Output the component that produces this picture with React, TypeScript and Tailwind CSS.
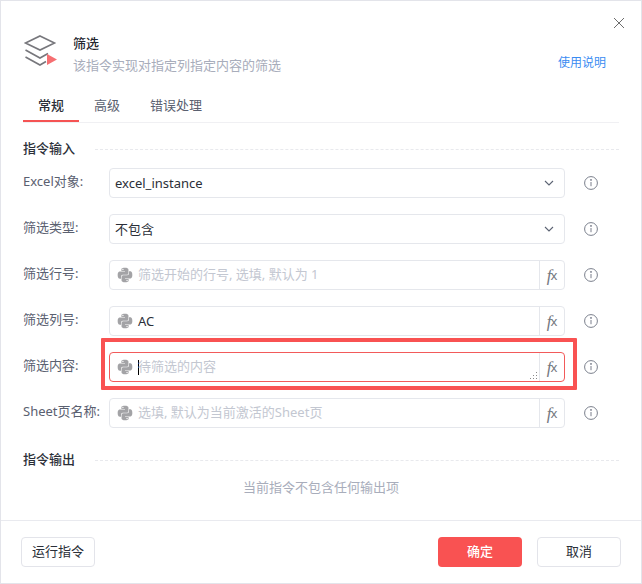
import React from "react";

function Py() {
  return (
    <svg width="16" height="16" viewBox="0 0 24 24" fill="#a3a3a6" className="shrink-0">
      <path d="M11.9 1C6.3 1 6.6 3.4 6.6 3.4v2.5h5.4v.8H4.5S1 6.3 1 12s3.1 5.5 3.1 5.5H6v-2.7s-.1-3.1 3-3.1h5.3s2.9 0 2.9-2.8V4s.4-3-5.3-3zM8.9 2.7a1 1 0 1 1 0 2 1 1 0 0 1 0-2z" />
      <path d="M12.1 23c5.6 0 5.3-2.4 5.3-2.4v-2.5H12v-.8h7.5s3.5.4 3.5-5.3-3.1-5.5-3.1-5.5H18v2.7s.1 3.1-3 3.1H9.7s-2.9 0-2.9 2.8V20s-.4 3 5.3 3zm3-1.7a1 1 0 1 1 0-2 1 1 0 0 1 0 2z" />
    </svg>
  );
}

function Info() {
  return (
    <svg width="14" height="14" viewBox="0 0 14 14" fill="none" stroke="#7a7f8c" strokeWidth="1" className="shrink-0">
      <circle cx="7" cy="7" r="6.4" />
      <path d="M7 6v4.2" />
      <circle cx="7" cy="3.9" r="0.5" fill="#7a7f8c" />
    </svg>
  );
}

function Chevron() {
  return (
    <svg width="10" height="6" viewBox="0 0 10 6" fill="none" stroke="#5c6373" strokeWidth="1.1" className="shrink-0">
      <path d="M1 1l4 4 4-4" />
    </svg>
  );
}

function Fx() {
  return (
    <div className="flex w-[25px] shrink-0 items-center justify-center self-stretch border-l border-[#e5e7ec] text-[#74777f]">
      <span className="text-[17px] leading-none" style={{ fontFamily: '"Liberation Serif", serif', fontStyle: "italic" }}>
        f
      </span>
      <span className="ml-[-1px] text-[13px] leading-none">x</span>
    </div>
  );
}

function Row({ label, children }: { label: string; children: React.ReactNode }) {
  return (
    <div className="flex h-[30px] items-center">
      <div className="w-[86px] shrink-0 -translate-y-[2px] text-[13px] leading-[20px] text-[#5a6070]">{label}</div>
      {children}
      <div className="ml-[19px] flex w-[14px] justify-center">
        <Info />
      </div>
    </div>
  );
}

function SelectBox({ value }: { value: string }) {
  return (
    <div className="flex h-[30px] w-[456px] items-center justify-between rounded-[4px] border border-[#e5e7ec] pl-[5px] pr-[10px] text-[13px] text-[#2b2f38]">
      <span className="translate-y-[1px]">{value}</span>
      <Chevron />
    </div>
  );
}

function PyInput({ value, placeholder, focused }: { value?: string; placeholder?: string; focused?: boolean }) {
  return (
    <div className={`flex h-[30px] w-[456px] items-center rounded-[4px] border ${focused ? "border-[#f25a5a]" : "border-[#e5e7ec]"}`}>
      <div className="relative flex min-w-0 flex-1 items-center self-stretch pl-[7px]">
        <Py />
        <div className="ml-[5px] flex items-center text-[13px]">
          {focused && <span className="mr-[-1px] h-[15px] w-px bg-black" />}
          {value ? <span className="translate-y-[1px] text-[#2b2f38]">{value}</span> : <span className="text-[#c3c7d1]">{placeholder}</span>}
        </div>
        {focused && (
          <svg width="8" height="8" viewBox="0 0 8 8" fill="#8a8a8a" className="absolute bottom-[1px] right-[1px]">
            <rect x="6" y="0" width="1" height="1" />
            <rect x="3" y="3" width="1" height="1" />
            <rect x="6" y="3" width="1" height="1" />
            <rect x="0" y="6" width="1" height="1" />
            <rect x="3" y="6" width="1" height="1" />
            <rect x="6" y="6" width="1" height="1" />
          </svg>
        )}
      </div>
      <Fx />
    </div>
  );
}

function Section({ title }: { title: string }) {
  return (
    <div className="flex h-[20px] items-center">
      <span className="w-[72px] shrink-0 text-[13px] font-medium text-[#2b2f38]">{title}</span>
      <div className="flex-1 border-t border-dashed border-[#e8e9ed]" />
    </div>
  );
}

export default function App() {
  return (
    <div
      className="relative flex h-[584px] w-[642px] flex-col border border-[#e3e4ea] bg-white"
      style={{ fontFamily: '"Noto Sans", "Noto Sans CJK SC", sans-serif' }}
    >
      <div className="relative px-[22px]">
        <svg width="14" height="14" viewBox="0 0 14 14" stroke="#6d6d6d" strokeWidth="1" className="absolute right-[15px] top-[15px]">
          <path d="M2 2l10 10M12 2L2 12" />
        </svg>
        <div className="flex h-[122px] flex-col justify-end">
          <div className="flex items-start">
            <svg width="34" height="34" viewBox="0 0 34 34" fill="none" stroke="#77777c" strokeWidth="1.6" className="mt-[-2px] shrink-0">
              <path d="M17 2L31.5 9 17 16 2.5 9z" />
              <path d="M2.5 16L17 24l8-4.5" />
              <path d="M2.5 23L17 31l6-3.5" />
              <path d="M24 20v11l10-5.5z" fill="#f66f72" stroke="none" />
            </svg>
            <div className="ml-[16px] flex-1">
              <div className="mt-[-3px] text-[13px] font-medium leading-[20px] text-[#23262e]">筛选</div>
              <div className="mt-[2px] flex items-center justify-between pr-[13px]">
                <span className="text-[13px] leading-[20px] text-[#a8adbb]">该指令实现对指定列指定内容的筛选</span>
                <span className="-translate-y-[2px] text-[12px] leading-[20px] text-[#3a8cf2]">使用说明</span>
              </div>
            </div>
          </div>
          <div className="mt-[19px] flex h-[29px] border-b border-[#f0f0f3]">
            <div className="relative flex w-[56px] justify-center">
              <span className="translate-y-[1px] text-[13px] font-medium leading-[20px] text-[#2b2f38]">常规</span>
              <span className="absolute bottom-0 left-0 right-0 h-[2px] bg-[#f55353]" />
            </div>
            <span className="ml-[15px] translate-y-[1px] text-[13px] leading-[20px] text-[#5a6070]">高级</span>
            <span className="ml-[30px] translate-y-[1px] text-[13px] leading-[20px] text-[#5a6070]">错误处理</span>
          </div>
        </div>

        <div className="mt-[16px]">
          <Section title="指令输入" />
        </div>
        <div className="mt-[9px] flex flex-col gap-[16px]">
          <Row label="Excel对象:"><SelectBox value="excel_instance" /></Row>
          <Row label="筛选类型:"><SelectBox value="不包含" /></Row>
          <Row label="筛选行号:"><PyInput placeholder="筛选开始的行号, 选填, 默认为 1" /></Row>
          <Row label="筛选列号:"><PyInput value="AC" /></Row>
          <Row label="筛选内容:"><PyInput placeholder="待筛选的内容" focused /></Row>
          <Row label="Sheet页名称:"><PyInput placeholder="选填, 默认为当前激活的Sheet页" /></Row>
        </div>
        <div className="mt-[22px]">
          <Section title="指令输出" />
        </div>
        <div className="mt-[7px] text-center text-[13px] leading-[20px] text-[#a8adbb]">当前指令不包含任何输出项</div>
      </div>

      <div className="mt-[23px] flex flex-1 items-start justify-between border-t border-[#e9eaef] px-[20px] pt-[16px]">
        <button className="h-[30px] w-[74px] rounded-[4px] border border-[#e3e4ea] bg-white text-[13px] text-[#2b2f38]">运行指令</button>
        <div className="flex gap-[15px]">
          <button className="h-[30px] w-[84px] rounded-[4px] bg-[#f95252] text-[13px] font-medium text-white">确定</button>
          <button className="h-[30px] w-[84px] rounded-[4px] border border-[#e3e4ea] bg-white text-[13px] text-[#2b2f38]">取消</button>
        </div>
      </div>

      <div className="absolute left-[100px] top-[337px] h-[52px] w-[476px] rounded-[1px] border-[4px] border-[#f95252]" />
    </div>
  );
}
